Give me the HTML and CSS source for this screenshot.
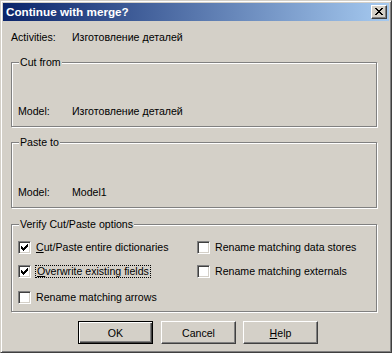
FILE: index.html
```html
<!DOCTYPE html>
<html>
<head>
<meta charset="utf-8">
<link rel="stylesheet" href="styles.css">
</head>
<body>
<div class="window">
  <div class="titlebar">
    <span class="title">Continue with merge?</span>
    <span class="close"><svg width="8" height="7" viewBox="0 0 8 7"><path d="M0 0h2v1H0zM6 0h2v1H6zM1 1h2v1H1zM5 1h2v1H5zM2 2h4v1H2zM3 3h2v1H3zM2 4h4v1H2zM1 5h2v1H1zM5 5h2v1H5zM0 6h2v1H0zM6 6h2v1H6z" fill="#000"/></svg></span>
  </div>
  <div class="content">
    <div class="info top"><span class="lbl">Activities:</span><span>Изготовление деталей</span></div>
    <fieldset class="group g-cut">
      <legend>Cut from</legend>
      <div class="info"><span class="lbl sub">Model:</span><span>Изготовление деталей</span></div>
    </fieldset>
    <fieldset class="group g-paste">
      <legend>Paste to</legend>
      <div class="info"><span class="lbl sub">Model:</span><span>Model1</span></div>
    </fieldset>
    <fieldset class="group g-verify">
      <legend>Verify Cut/Paste options</legend>
      <div class="opts">
        <div class="opt"><span class="cb"><svg width="11" height="11" viewBox="1 1 11 11"><path d="M3 5h1v1h1v1h1v-1h1v-1h1v-1h1v-1h1v3h-1v1h-1v1h-1v1h-1v1h-1v-1h-1v-1h-1z" fill="#000"/></svg></span><span class="ol"><u>C</u>ut/Paste entire dictionaries</span></div>
        <div class="opt"><span class="cb"></span><span class="ol">Rename matching data stores</span></div>
        <div class="opt"><span class="cb"><svg width="11" height="11" viewBox="1 1 11 11"><path d="M3 5h1v1h1v1h1v-1h1v-1h1v-1h1v-1h1v3h-1v1h-1v1h-1v1h-1v1h-1v-1h-1v-1h-1z" fill="#000"/></svg></span><span class="ol focus"><u>O</u>verwrite existing fields</span></div>
        <div class="opt"><span class="cb"></span><span class="ol">Rename matching externals</span></div>
        <div class="opt r3"><span class="cb"></span><span class="ol">Rename matching arrows</span></div>
      </div>
    </fieldset>
    <div class="buttons">
      <button class="btn default">OK</button>
      <button class="btn">Cancel</button>
      <button class="btn help"><u>H</u>elp</button>
    </div>
  </div>
</div>
</body>
</html>
```

FILE: styles.css
```css
html, body {
  margin: 0;
  padding: 0;
  background: #d4d0c8;
}
.window {
  width: 392px;
  height: 353px;
  box-sizing: border-box;
  background: #d4d0c8;
  border: 1px solid;
  border-color: #d4d0c8 #404040 #404040 #d4d0c8;
  box-shadow: inset 1px 1px #fff, inset -1px -1px #808080;
  padding: 2px;
  font-family: "Liberation Sans", Arial, sans-serif;
  font-size: 10.6px;
  color: #000;
  display: flex;
  flex-direction: column;
}
.titlebar {
  height: 18px;
  flex: none;
  display: flex;
  align-items: center;
  justify-content: space-between;
  padding: 0 2px 0 2px;
  background: linear-gradient(to right, #0a246a, #a6caf0);
}
.title {
  color: #fff;
  font-weight: bold;
  font-size: 11.7px;
  line-height: 18px;
  padding-left: 1px;
}
.close {
  width: 16px;
  height: 14px;
  box-sizing: border-box;
  background: #d4d0c8;
  border: 1px solid;
  border-color: #fff #404040 #404040 #fff;
  box-shadow: inset -1px -1px #808080;
  display: flex;
  align-items: flex-start;
  padding: 2px 0 0 3px;
}
.close svg { display: block; }
.content {
  padding: 10px 12px 0 8px;
  display: flex;
  flex-direction: column;
}
.info {
  display: flex;
  line-height: 13px;
  white-space: nowrap;
}
.lbl { width: 61px; flex: none; }
.lbl.sub { width: 54px; }
.group {
  margin: 12px 0 0 0;
  padding: 36px 6px 8px 6px;
  border: 1px solid #808080;
  box-shadow: inset 1px 1px #fff, 1px 1px #fff;
  min-width: 0;
}
.group legend {
  padding: 0 1px;
  margin-left: 1px;
  line-height: 13px;
  background: #d4d0c8;
}
.g-paste { margin-top: 9px; padding-top: 37px; }
.g-verify { margin-top: 10px; padding: 10px 6px 9px 6px; }
.opts {
  display: grid;
  grid-template-columns: 179px 1fr;
  grid-auto-rows: 13px;
  row-gap: 11px;
}
.opt {
  display: flex;
  align-items: center;
  white-space: nowrap;
  height: 13px;
}
.opt.r3 { margin-top: 2px; }
.cb {
  width: 13px;
  height: 13px;
  flex: none;
  box-sizing: border-box;
  background: #fff;
  border: 1px solid;
  border-color: #808080 #fff #fff #808080;
  box-shadow: inset 1px 1px #404040, inset -1px -1px #d4d0c8;
}
.cb svg { display: block; }
.ol {
  margin-left: 4px;
  padding: 0 1px 0 0;
  border: 1px dotted transparent;
  line-height: 11px;
}
.ol.focus { border-color: #000; padding-left: 1px; }
.buttons {
  display: flex;
  gap: 8px;
  margin-top: 9px;
  margin-left: 67px;
}
.btn {
  width: 75px;
  height: 23px;
  margin: 0;
  padding: 0;
  box-sizing: border-box;
  font-family: "Liberation Sans", Arial, sans-serif;
  font-size: 10.6px;
  color: #000;
  background: #d4d0c8;
  border: 1px solid;
  border-color: #fff #404040 #404040 #fff;
  box-shadow: inset -1px -1px #808080;
  border-radius: 0;
}
.btn.default {
  border-color: #000;
  box-shadow: inset 1px 1px #fff, inset -1px -1px #404040, inset -2px -2px #808080;
}
.btn.help { margin-left: -1px; }
```
